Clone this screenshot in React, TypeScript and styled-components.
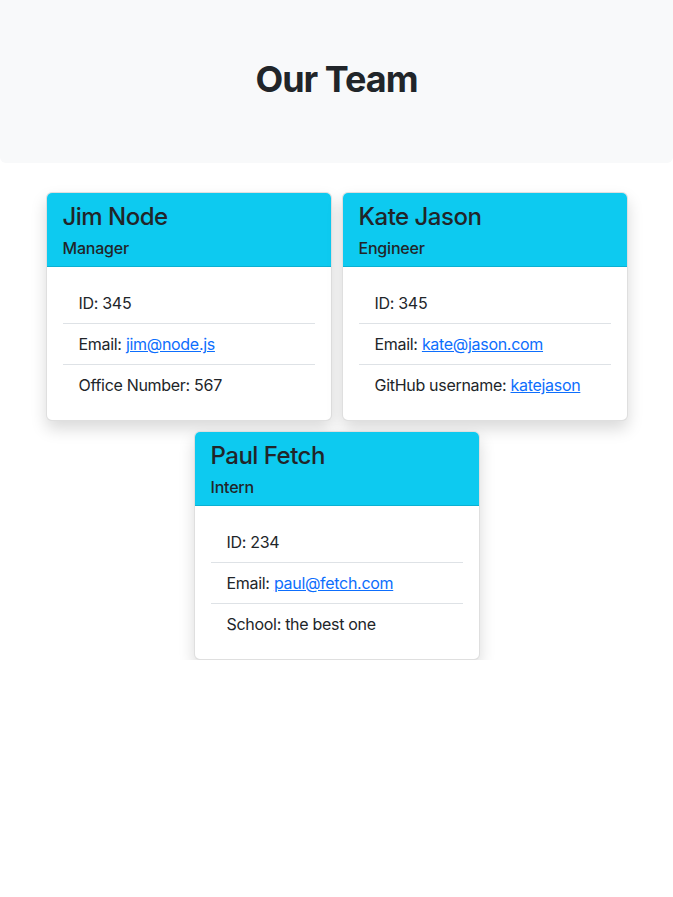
import React from "react";
import styled, { createGlobalStyle } from "styled-components";

const GlobalStyle = createGlobalStyle`
  html, body { margin: 0; padding: 0; background: #fff; }
  body {
    font-family: Inter, "Noto Sans", "Liberation Sans", sans-serif;
    color: #212529;
    font-size: 16px;
    line-height: 1.5;
  }
  * { box-sizing: border-box; }
`;

const Hero = styled.header`
  background: #f8f9fa;
  border-radius: 0 0 6px 6px;
  height: 163px;
  display: flex;
  align-items: center;
  justify-content: center;
  padding-bottom: 5px;
`;

const Title = styled.h1`
  margin: 0;
  font-size: 36px;
  line-height: 44px;
  font-weight: 700;
  letter-spacing: -1px;
  color: #212529;
`;

const Grid = styled.main`
  display: flex;
  flex-wrap: wrap;
  justify-content: center;
  gap: 10px;
  padding-top: 29px;
`;

const Card = styled.section`
  width: 286px;
  background: #fff;
  border: 1px solid rgba(0, 0, 0, 0.125);
  border-radius: 6px;
  box-shadow: 0 8px 16px rgba(0, 0, 0, 0.15);
  overflow: hidden;
`;

const CardHeader = styled.div`
  background: #0dcaf0;
  padding: 9px 16px 6px;
  border-bottom: 1px solid rgba(0, 0, 0, 0.125);
`;

const Name = styled.h2`
  margin: 0 0 5px;
  font-size: 24px;
  line-height: 29px;
  font-weight: 500;
  letter-spacing: -0.5px;
`;

const Role = styled.h3`
  margin: 0;
  font-size: 16px;
  line-height: 24px;
  font-weight: 500;
  letter-spacing: -0.2px;
`;

const Body = styled.div`
  padding: 16px 16px 15px;
`;

const List = styled.ul`
  list-style: none;
  margin: 0;
  padding: 0;
`;

const Item = styled.li`
  padding: 8px 16px;
  line-height: 24px;
  letter-spacing: -0.3px;
  border-top: 1px solid #dee2e6;
  &:first-child { border-top: none; }
`;

const Link = styled.a`
  color: #0d6efd;
  text-decoration: underline;
`;

type Member = {
  name: string;
  role: string;
  id: number;
  email: string;
  extraLabel: string;
  extraValue: string;
  extraLink?: boolean;
};

const team: Member[] = [
  { name: "Jim Node", role: "Manager", id: 345, email: "jim@node.js", extraLabel: "Office Number", extraValue: "567" },
  { name: "Kate Jason", role: "Engineer", id: 345, email: "kate@jason.com", extraLabel: "GitHub username", extraValue: "katejason", extraLink: true },
  { name: "Paul Fetch", role: "Intern", id: 234, email: "paul@fetch.com", extraLabel: "School", extraValue: "the best one" },
];

export default function App() {
  return (
    <>
      <GlobalStyle />
      <Hero>
        <Title>Our Team</Title>
      </Hero>
      <Grid>
        {team.map((m) => (
          <Card key={m.name}>
            <CardHeader>
              <Name>{m.name}</Name>
              <Role>{m.role}</Role>
            </CardHeader>
            <Body>
              <List>
                <Item>ID: {m.id}</Item>
                <Item>
                  Email: <Link href={`mailto:${m.email}`}>{m.email}</Link>
                </Item>
                <Item>
                  {m.extraLabel}:{" "}
                  {m.extraLink ? (
                    <Link href={`https://github.com/${m.extraValue}`}>{m.extraValue}</Link>
                  ) : (
                    m.extraValue
                  )}
                </Item>
              </List>
            </Body>
          </Card>
        ))}
      </Grid>
    </>
  );
}
